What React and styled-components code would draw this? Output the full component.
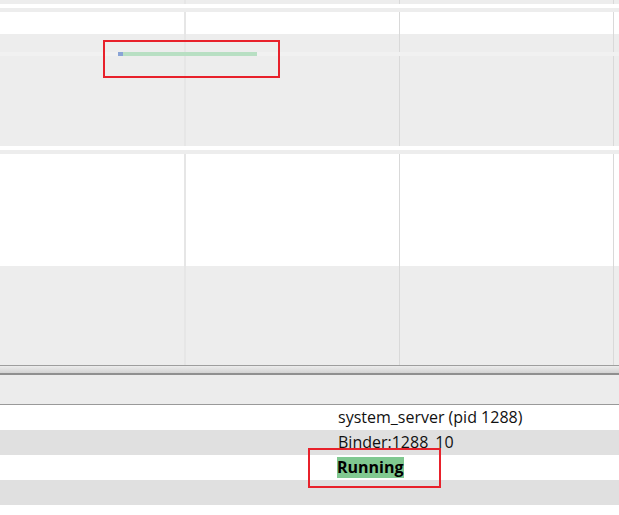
import styled, { createGlobalStyle } from "styled-components";

const GlobalStyle = createGlobalStyle`
  html, body {
    margin: 0;
    padding: 0;
    background: #ffffff;
  }
  body {
    font-family: "Open Sans", "Noto Sans", sans-serif;
    overflow: hidden;
  }
`;

// vertical time grid lines drawn behind every track
const gridLines = `linear-gradient(to right,
  transparent 184px, #e6e6e6 184px, #e6e6e6 186px, transparent 186px,
  transparent 399px, #d9d9d9 399px, #d9d9d9 400px, transparent 400px,
  transparent 613px, #d9d9d9 613px, #d9d9d9 614px, transparent 614px)`;

const Page = styled.div`
  position: relative;
  display: flex;
  flex-direction: column;
  width: 619px;
  height: 515px;
  overflow: hidden;

  & > * {
    flex-shrink: 0;
  }
`;

const Timeline = styled.div`
  display: flex;
  flex-direction: column;
  height: 365px;
`;

const Track = styled.div`
  display: flex;
  flex-direction: column;
  flex: ${(p) => (p.$grow ? "1" : "none")};
  height: ${(p) => (p.$grow ? "auto" : `${p.$h}px`)};
  padding-top: ${(p) => p.$pad || 0}px;
  box-sizing: border-box;
  background-color: ${(p) => (p.$gray ? "#ededed" : "#ffffff")};
  background-image: ${(p) => (p.$lines ? gridLines : "none")};
`;

const SliceRow = styled.div`
  display: flex;
  height: 4px;
  background: #f1f1f1;
`;

const Slice = styled.div`
  display: flex;
  margin-left: 118px;
  width: 139px;
`;

const SliceHead = styled.div`
  width: 5px;
  background: #8aa4d6;
`;

const SliceBody = styled.div`
  flex: 1;
  background: #b8dfc3;
`;

const Splitter = styled.div`
  height: 10px;
  box-sizing: border-box;
  border-top: 1px solid #9e9e9e;
  border-bottom: 2px solid #8f8f8f;
  background: linear-gradient(to bottom, #ececec, #d2d2d2);
`;

const PanelHeader = styled.div`
  height: 30px;
  box-sizing: border-box;
  background: #ececec;
  border-bottom: 1px solid #999999;
`;

const DetailList = styled.div`
  display: flex;
  flex-direction: column;
`;

const DetailRow = styled.div`
  flex-shrink: 0;
  height: 25px;
  line-height: 25px;
  padding-left: 338px;
  font-size: 16px;
  color: #111111;
  white-space: nowrap;
  background: ${(p) => (p.$striped ? "#e0e0e0" : "#ffffff")};
`;

const StateTag = styled.span`
  display: inline-block;
  margin-left: -1px;
  margin-top: 2px;
  height: 21px;
  line-height: 21px;
  vertical-align: top;
  font-weight: 700;
  background: #80c890;
  color: #000000;
`;

const Marker = styled.div`
  position: absolute;
  left: ${(p) => p.$x}px;
  top: ${(p) => p.$y}px;
  width: ${(p) => p.$w}px;
  height: ${(p) => p.$h}px;
  box-sizing: border-box;
  border: 2px solid #e8212b;
  pointer-events: none;
`;

export default function App() {
  return (
    <>
      <GlobalStyle />
      <Page>
        <Timeline>
          <Track $h={4} $gray $lines />
          <Track $h={4} />
          <Track $h={4} $gray />
          <Track $h={22} $lines />
          <Track $h={112} $pad={18} $gray $lines>
            <SliceRow>
              <Slice>
                <SliceHead />
                <SliceBody />
              </Slice>
            </SliceRow>
          </Track>
          <Track $h={4} />
          <Track $h={4} $gray />
          <Track $h={112} $lines />
          <Track $grow $gray $lines />
        </Timeline>
        <Splitter />
        <PanelHeader />
        <DetailList>
          <DetailRow>system_server (pid 1288)</DetailRow>
          <DetailRow $striped>Binder:1288_10</DetailRow>
          <DetailRow>
            <StateTag>Running</StateTag>
          </DetailRow>
          <DetailRow $striped />
          <DetailRow />
        </DetailList>
        <Marker $x={103} $y={40} $w={177} $h={38} />
        <Marker $x={308} $y={448} $w={133} $h={40} />
      </Page>
    </>
  );
}
